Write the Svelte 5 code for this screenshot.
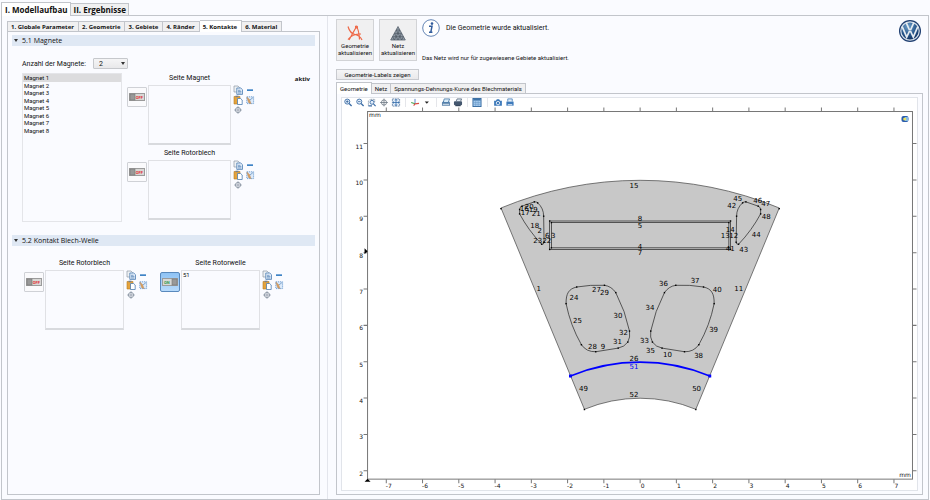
<script>
  let mainTab = "I. Modellaufbau";
  let stepTab = "5. Kontakte";
  let plotTab = "Geometrie";
  let magnetCount = "2";
  let selectedMagnet = 1;
  let states = { magnet: false, rotor: false, blech: false, welle: true };

  const mainTabs = ["I. Modellaufbau", "II. Ergebnisse"];
  const stepTabs = ["1. Globale Parameter", "2. Geometrie", "3. Gebiete", "4. Ränder", "5. Kontakte", "6. Material"];
  const plotTabs = ["Geometrie", "Netz", "Spannungs-Dehnungs-Kurve des Blechmaterials"];
  const magnets = [1, 2, 3, 4, 5, 6, 7, 8];

  // plot scale: 36.2 units per mm, origin on the symmetry axis
  const px = (mm) => 639.6 + mm * 36.2;
  const py = (mm) => 542.8 - mm * 36.3;
  const xTicks = [-7, -6, -5, -4, -3, -2, -1, 0, 1, 2, 3, 4, 5, 6, 7];
  const yTicks = [2, 3, 4, 5, 6, 7, 8, 9, 10, 11];

  // edge number, x, y
  const edges = [
    [15, 633.5, 185], [8, 639.5, 218.5], [5, 639.5, 225.5], [4, 639.5, 246], [7, 639.5, 252],
    [16, 524, 208], [17, 525, 212], [20, 529, 206], [19, 533, 209], [21, 536, 213.5], [18, 534.5, 225.5],
    [2, 539.5, 230], [6, 547, 235.5], [3, 553, 235.5], [23, 537.5, 240], [22, 546.5, 240],
    [45, 737, 198], [46, 757, 200], [47, 765, 203.5], [42, 731, 205], [48, 765.5, 216.5], [44, 755.5, 234.5],
    [43, 743, 249], [14, 729.5, 229.5], [13, 724.5, 235.5], [12, 733, 235.5], [41, 729.5, 248],
    [1, 538.5, 288], [11, 738, 288],
    [24, 573.5, 297.5], [27, 596, 289], [29, 604, 292], [25, 577, 320.5], [30, 617.5, 315.5],
    [32, 623, 332], [31, 617, 341.5], [28, 592, 346], [9, 602.5, 346],
    [36, 663, 283.5], [37, 694.5, 280.5], [40, 716.5, 289], [34, 649.5, 307], [39, 713, 329.5],
    [33, 644, 340.5], [35, 650, 350.5], [10, 667, 354.5], [38, 698, 355],
    [26, 633.5, 358], [51, 633.5, 366.5], [49, 583, 388.5], [50, 696, 388.5], [52, 633.5, 394],
  ];

  // vertices of the left half, the right half is mirrored
  const vertices = [
    [519.3, 209.3], [521.7, 206], [534, 201.7], [537.3, 202.7], [543.3, 216], [543.7, 242], [541.3, 244], [519.3, 213.7],
    [549.3, 220.8], [551, 222.4], [549.3, 249.2], [551, 247.6],
    [565.7, 303.3], [576.3, 286.7], [604, 285], [615.3, 292.3], [629, 330.7], [627.3, 341.7], [617.7, 347.7], [595.3, 351.3], [581, 344.3],
    [500.7, 208.5], [584, 409],
  ];

  const toggle = (key) => {
    states[key] = !states[key];
  };
</script>

{#snippet tabs(items, current, pick, kind)}
  <div class="tabs {kind}" role="tablist">
    {#each items as item}
      <button type="button" role="tab" aria-selected={item === current} class:active={item === current} on:click={() => pick(item)}>{item}</button>
    {/each}
  </div>
{/snippet}

{#snippet half()}
  <path d="M519.3 213.7V209.3Q519.6 206.6 521.7 206L534 201.7Q536 201.4 537.3 202.7Q543.3 208 543.3 216L543.7 242Q543.5 244.6 541.3 244Q528 230 519.3 213.7Z" />
  <path d="M565.7 303.3C565.5 293 568.5 288.5 576.3 286.7Q590 284.3 604 285Q611 286 615.3 292.3Q625 311 629 330.7Q630 337 627.3 341.7Q624 346.5 617.7 347.7L595.3 351.3Q586 351.6 581 344.3Q570 325 565.7 303.3Z" />
  {#each vertices as [x, y]}
    <rect class="vertex" x={x - 0.7} y={y - 0.7} width="1.4" height="1.4" />
  {/each}
{/snippet}

{#snippet field(key, label, content)}
  <div class="field">
    <span class="caption" id="cap-{key}">{label}</span>
    <button type="button" class="toggle" class:on={states[key]} aria-label={label} aria-pressed={states[key]} on:click={() => toggle(key)}>
      <svg viewBox="0 0 16 8" width="16" height="8">
        <rect x="0.5" y="0.5" width="15" height="7" fill="#d8d8d6" stroke="#9b9b9b" />
        {#if states[key]}
          <rect x="10" y="1" width="5" height="6" fill="#999" stroke="#777" stroke-width="0.6" />
          <text x="2" y="5.8" fill="#2f9950">ON</text>
        {:else}
          <rect x="1" y="1" width="5" height="6" fill="#999" stroke="#777" stroke-width="0.6" />
          <text x="6.8" y="5.8" fill="#e02c34">OFF</text>
        {/if}
      </svg>
    </button>
    <textarea aria-labelledby="cap-{key}" value={content}></textarea>
    <div class="tools">
      <button type="button" aria-label="Kopieren">
        <svg viewBox="0 0 10 10">
          <path d="M1 1h4l1.500 1.500V7H1z" fill="#eef1f4" stroke="#8c98a5" stroke-width="0.700" />
          <path d="M3.800 3h4l1.700 1.700V9.400H3.800z" fill="#e4eefa" stroke="#4c7db2" stroke-width="0.800" />
          <path d="M5 5.300h2.500M5 6.600h3.400M5 8h3.400" stroke="#4c7db2" stroke-width="0.700" />
        </svg>
      </button>
      <button type="button" aria-label="Entfernen">
        <svg viewBox="0 0 10 10"><rect x="2" y="4.300" width="6" height="1.700" fill="#3f84c6" /></svg>
      </button>
      <button type="button" aria-label="Einfügen">
        <svg viewBox="0 0 10 10">
          <path d="M1 1.500h6V9H1z" fill="#e5a33c" stroke="#b67c24" stroke-width="0.600" />
          <rect x="2.500" y="0.700" width="3" height="1.500" fill="#78818c" />
          <path d="M4.500 3.500h3l1.700 1.500v4.500H4.500z" fill="#fff" stroke="#4c7db2" stroke-width="0.800" />
        </svg>
      </button>
      <button type="button" aria-label="Auswahl löschen">
        <svg viewBox="0 0 10 10">
          <rect x="1.800" y="1.800" width="6.800" height="6.800" fill="#dceafa" stroke="#6a9bd0" stroke-width="0.900" stroke-dasharray="1.300 0.800" />
          <path d="M1.800 2l2.700 2.500 1.600 4.200-2.400-1z" fill="#dda05c" stroke="#a67c56" stroke-width="0.400" />
          <path d="M5 5l3-2.500" stroke="#6a93c0" stroke-width="0.800" />
        </svg>
      </button>
      <button type="button" aria-label="Zoom auf Auswahl">
        <svg viewBox="0 0 10 10">
          <circle cx="5" cy="5" r="2.600" fill="none" stroke="#8b96a3" stroke-width="0.900" />
          <path d="M5 1.200v7.600M1.200 5h7.600" stroke="#8b96a3" stroke-width="0.800" />
        </svg>
      </button>
    </div>
  </div>
{/snippet}

{#snippet lens(plus)}
  <svg viewBox="0 0 10 10">
    <circle cx="4.200" cy="4" r="2.800" fill="#e3eefb" stroke="#3c6da6" />
    <path d="M6.200 6.200L9 9" stroke="#3c6da6" stroke-width="1.500" />
    <path d={plus ? "M2.800 4h2.800M4.200 2.600v2.800" : "M2.800 4h2.800"} stroke="#28588f" stroke-width="0.800" />
  </svg>
{/snippet}

<div class="page">
  {@render tabs(mainTabs, mainTab, (t) => (mainTab = t), "main")}
  <main class="frame">
    <div class="left">
      {@render tabs(stepTabs, stepTab, (t) => (stepTab = t), "steps")}
      <div class="panel">
        <h2><span class="tri"></span>5.1 Magnete</h2>
        <div class="count">
          <label for="count">Anzahl der Magnete:</label>
          <span class="drop">
            <select id="count" bind:value={magnetCount}>
              <option>1</option>
              <option>2</option>
              <option>4</option>
            </select>
          </span>
        </div>
        <div class="magnets">
          <ul role="listbox" aria-label="Magnete">
            {#each magnets as n}
              <li role="option" aria-selected={n === selectedMagnet} class:selected={n === selectedMagnet}>
                <button type="button" on:click={() => (selectedMagnet = n)}>Magnet {n}</button>
              </li>
            {/each}
          </ul>
          <div class="fields">
            {@render field("magnet", "Seite Magnet", "")}
            {@render field("rotor", "Seite Rotorblech", "")}
          </div>
          <strong class="status">aktiv</strong>
        </div>
        <h2 class="second"><span class="tri"></span>5.2 Kontakt Blech-Welle</h2>
        <div class="shaft">
          {@render field("blech", "Seite Rotorblech", "")}
          {@render field("welle", "Seite Rotorwelle", "51")}
        </div>
      </div>
    </div>

    <div class="right">
      <header>
        <button type="button" class="big">
          <svg viewBox="0 0 16 16" width="16" height="16" fill="none" stroke="#ee6847" stroke-width="1.200">
            <path d="M1 1.500Q3 8.500 8 9.500T15 15M9.500 1.500L2 15M9.500 1.500Q12 5 12.500 14.500M1 14.500Q5 9 14 9" />
            <circle cx="9.500" cy="2" r="1" />
          </svg>
          <span>Geometrie<br />aktualisieren</span>
        </button>
        <button type="button" class="big">
          <svg viewBox="0 0 16 16" width="16" height="16">
            <path d="M8 1.500L15.300 15H0.700z" fill="#8e98a4" stroke="#59636e" stroke-width="0.800" />
            <path d="M6.300 5h3.400M4.500 8.400h7M2.600 11.700h10.800M6.300 5l5.400 10M4.500 8.400L8 15M2.600 11.700L4.300 15M9.700 5L4.300 15M11.500 8.400L8 15M13.400 11.700L11.700 15" stroke="#46505b" stroke-width="0.600" fill="none" />
          </svg>
          <span>Netz<br />aktualisieren</span>
        </button>
        <div class="messages">
          <p class="info">
            <svg viewBox="0 0 18 18" width="18" height="18">
              <circle cx="9" cy="9" r="8.300" fill="#fff" stroke="#6485b5" stroke-width="1" />
              <circle cx="10" cy="4.600" r="1.300" fill="#305b9c" />
              <path d="M7 7.300h3L8.800 13.200h1.600M7 13.200h1.800" fill="none" stroke="#305b9c" stroke-width="1.500" />
            </svg>
            Die Geometrie wurde aktualisiert.
          </p>
          <p class="note">Das Netz wird nur für zugewiesene Gebiete aktualisiert.</p>
        </div>
        <svg class="logo" viewBox="0 0 22 22" width="22" height="22">
          <defs>
            <radialGradient id="blue" cx="0.4" cy="0.25" r="0.8">
              <stop offset="0" stop-color="#6d9fca" />
              <stop offset="0.6" stop-color="#245287" />
              <stop offset="1" stop-color="#102b58" />
            </radialGradient>
          </defs>
          <circle cx="11" cy="11" r="11" fill="#1d3d70" />
          <circle cx="11" cy="11" r="9.200" fill="url(#blue)" stroke="#d5dfe9" stroke-width="1.200" />
          <path d="M7.200 2.700L10.200 9.500H11.800L14.800 2.700M3.200 6.600L7.700 17.200L10.300 11.500H11.700L14.300 17.200L18.800 6.600" fill="none" stroke="#e5ebf1" stroke-width="1.700" />
        </svg>
      </header>
      <button type="button" class="labels">Geometrie-Labels zeigen</button>

      {@render tabs(plotTabs, plotTab, (t) => (plotTab = t), "plots")}
      <div class="panel">
        <div class="graphics">
          <div class="toolbar">
            <button type="button" aria-label="Vergrößern">{@render lens(true)}</button>
            <button type="button" aria-label="Verkleinern">{@render lens(false)}</button>
            <button type="button" aria-label="Zoom-Rahmen">
              <svg viewBox="0 0 10 10">
                <path d="M1 8.500V3.500L3 1.500h5v3" fill="none" stroke="#75899e" stroke-width="0.900" stroke-dasharray="1.500 0.600" />
                <circle cx="5" cy="4.800" r="2.200" fill="#e3eefb" stroke="#3c6da6" />
                <path d="M6.600 6.500L9 9M1 8.700h4" stroke="#3c6da6" stroke-width="1.300" />
              </svg>
            </button>
            <button type="button" aria-label="Zoom auf Auswahl">
              <svg viewBox="0 0 10 10" fill="none" stroke="#6d7883" stroke-width="0.900">
                <circle cx="5" cy="5" r="2.900" />
                <path d="M5 0.700v8.600M0.700 5h8.600" />
              </svg>
            </button>
            <button type="button" aria-label="Alles anzeigen">
              <svg viewBox="0 0 10 10">
                <rect x="1" y="1" width="8" height="8" fill="#e8f1fb" stroke="#5c7ca1" stroke-width="0.900" stroke-dasharray="2 0.700" />
                <path d="M5 1.500v7M1.500 5h7M4 2.800l1-1.300 1 1.300M4 7.200l1 1.300 1-1.300M2.800 4L1.500 5l1.300 1M7.200 4l1.300 1-1.300 1" fill="none" stroke="#326aa9" stroke-width="0.900" />
              </svg>
            </button>
            <span class="sep"></span>
            <button type="button" aria-label="Ansicht">
              <svg viewBox="0 0 10 10" fill="none">
                <path d="M5 6.500V1" stroke="#4d78c6" />
                <path d="M5 6.500L0.800 5" stroke="#44a750" stroke-width="1.200" />
                <path d="M5 6.500L9.500 6M5 6.500L3.500 8.500" stroke="#d94b45" stroke-width="1.200" />
              </svg>
            </button>
            <button type="button" aria-label="Ansicht wählen">
              <svg viewBox="0 0 10 10"><path d="M2.500 3.800h4.600L4.800 6.500z" fill="#222" /></svg>
            </button>
            <span class="sep"></span>
            <button type="button" aria-label="Bild in Bericht">
              <svg viewBox="0 0 10 10">
                <path d="M0.500 5L2.500 3h5L9.500 5V8.500H0.500z" fill="#5e86ad" />
                <path d="M3 1h6L7.500 5H2z" fill="#d9ecf8" stroke="#356a9d" stroke-width="0.800" />
                <path d="M1.500 7h7" stroke="#e4eef6" />
              </svg>
            </button>
            <button type="button" aria-label="Auswahl drucken">
              <svg viewBox="0 0 10 10">
                <path d="M3 3.500L4 1h5L8 3.500" fill="#dce6ef" stroke="#43566e" stroke-width="0.800" />
                <rect x="0.500" y="3.500" width="9" height="4.500" rx="1" fill="#43566e" />
                <path d="M2 8.500h6" stroke="#23364d" stroke-width="1.200" />
              </svg>
            </button>
            <span class="sep"></span>
            <button type="button" aria-label="Tabelle">
              <svg viewBox="0 0 10 10">
                <rect x="0.500" y="0.500" width="9" height="9" fill="#a6cbee" stroke="#2f659d" />
                <path d="M1 2h8" stroke="#2f659d" stroke-width="1.500" />
                <path d="M3.500 3v6M6.300 3v6M1 5h8M1 7h8" stroke="#6797c5" stroke-width="0.600" />
              </svg>
            </button>
            <span class="sep wide"></span>
            <button type="button" aria-label="Schnappschuss">
              <svg viewBox="0 0 10 10">
                <path d="M0.700 3h2l1-1.500h2.600l1 1.500h2v5.700H0.700z" fill="#3b78b9" />
                <circle cx="5" cy="5.700" r="1.900" fill="#3b78b9" stroke="#fff" stroke-width="0.900" />
              </svg>
            </button>
            <button type="button" aria-label="Drucken">
              <svg viewBox="0 0 10 10">
                <path d="M2.500 4V1h5v3" fill="#e4eef8" stroke="#4680ba" stroke-width="0.900" />
                <rect x="1" y="4" width="8" height="4.500" fill="#3d7abb" />
                <path d="M2.500 7.500h5" stroke="#fff" />
              </svg>
            </button>
          </div>

          <svg class="plot" viewBox="342 107 574 382">
            <rect class="axis" x="367.5" y="111.500" width="544" height="367" />
            {#each xTicks as t}
              <path class="axis" d="M{px(t)} 107.500v4M{px(t)} 478.500v4" />
              <text class="tick" x={px(t) + 2.5} y="487" text-anchor="middle">{t}</text>
            {/each}
            {#each yTicks as t}
              <path class="axis" d="M363.500 {py(t)}h4M911.500 {py(t)}h4" />
              <text class="tick" x="363" y={py(t) + 5} text-anchor="end">{t}</text>
            {/each}
            <path d="M364.500 481L367.500 478L370.500 481ZM364.500 248L367.500 251L364.500 254Z" />
            <text class="tick" x="369" y="117">mm</text>
            <text class="tick" x="910" y="476" text-anchor="end">mm</text>

            <path class="sector" d="M500.700 207.800A363 363 0 0 1 778.500 207.800L695.200 408.800A145.200 145.200 0 0 0 584 408.800Z" />
            <rect class="line" x="549.300" y="220.800" width="180.600" height="28.400" />
            <rect class="line" x="551" y="222.400" width="177.200" height="25.200" />
            <g class="line">{@render half()}</g>
            <g class="line" transform="translate(1279.2) scale(-1 1)">{@render half()}</g>
            <path class="picked" d="M570.100 375.500A181.500 181.500 0 0 1 709.100 375.500" />
            <path fill="#00f" d="M568.600 374h3v3h-3zM707.600 374h3v3h-3z" />
            {#each edges as [n, x, y]}
              <text class="edge" class:picked-label={n === 51} {x} y={y + 2.5}>{n}</text>
            {/each}

            <rect x="900.500" y="116" width="7" height="6" rx="2" fill="#295cae" />
            <path d="M904 117h3v4h-3z" fill="#83bce7" />
            <circle cx="903.700" cy="119" r="1.500" fill="#f0e45c" />
          </svg>
        </div>
      </div>
    </div>
  </main>
</div>

<style>
  :global(body) {
    margin: 0;
    background: #fafbff;
  }

  .page {
    box-sizing: border-box;
    min-height: 100vh;
    padding: 2px 1px 1px;
    display: flex;
    flex-direction: column;
    font-family: Roboto, "Noto Sans", sans-serif;
    font-size: 6px;
    line-height: 8px;
    color: #111;
  }

  button,
  select,
  textarea {
    box-sizing: border-box;
    margin: 0;
    padding: 0;
    border: 0;
    background: none;
    font: inherit;
    color: inherit;
  }

  h2,
  p,
  ul {
    margin: 0;
    padding: 0;
    font-weight: normal;
  }

  svg {
    display: block;
  }

  .tabs {
    display: flex;
    align-items: flex-end;
  }

  .tabs button {
    border: 1px solid #c2c5cb;
    border-left-width: 0;
    border-bottom: 0;
    background: #f0f0f1;
    height: 10px;
    padding: 0 3px;
    white-space: nowrap;
  }

  .tabs button:first-child {
    border-left-width: 1px;
  }

  .tabs button.active {
    position: relative;
    background: #fff;
    margin-bottom: -1px;
    height: 12px;
  }

  .main,
  .steps,
  h2,
  .status {
    font-family: "Open Sans", "Noto Sans", sans-serif;
  }

  .main button {
    font-size: 8px;
    font-weight: bold;
    height: 12px;
    padding: 0 2px 0 3px;
  }

  .main button.active {
    height: 14px;
  }

  .steps button {
    font-weight: bold;
    padding: 0 4px 0 3px;
  }

  .frame {
    flex: 1;
    display: grid;
    grid-template-columns: 326px 1fr;
    border: 1px solid #c2c5cb;
  }

  .left {
    display: flex;
    flex-direction: column;
    padding: 4px 7px 4px 5px;
    border-right: 1px solid #e3e5ec;
  }

  .right {
    display: flex;
    flex-direction: column;
    padding: 3px 5px 4px 8px;
  }

  .panel {
    flex: 1;
    padding: 3px 4px;
    border: 1px solid #c2c5cb;
  }

  h2 {
    display: flex;
    align-items: center;
    gap: 4px;
    height: 11px;
    padding-left: 2px;
    background: #dfe8f4;
    font-size: 7px;
  }

  .second {
    margin-top: 13px;
  }

  .tri {
    border: 2px solid transparent;
    border-top: 3px solid #333;
    border-bottom: 0;
  }

  .count {
    display: flex;
    align-items: center;
    gap: 7px;
    margin: 12px 0 4px 10px;
    height: 11px;
    font-size: 7px;
  }

  .drop {
    display: flex;
    position: relative;
  }

  .drop::after {
    content: "";
    position: absolute;
    right: 3px;
    top: 4px;
    border: 2px solid transparent;
    border-top: 3px solid #333;
    border-bottom: 0;
    pointer-events: none;
  }

  select {
    appearance: none;
    width: 35px;
    height: 11px;
    padding-left: 5px;
    border: 1px solid #c6c8cc;
    border-radius: 1px;
    background: linear-gradient(#f5f5f6, #e8e8ea);
  }

  .magnets {
    display: flex;
    gap: 5px;
    padding: 0 5px 0 10px;
  }

  ul {
    box-sizing: border-box;
    width: 100px;
    height: 149px;
    padding-bottom: 87px;
    border: 1px solid #e4e5e9;
    display: grid;
    grid-auto-rows: 1fr;
    list-style: none;
  }

  li {
    display: flex;
    min-height: 0;
  }

  li button {
    flex: 1;
    padding-left: 1px;
    text-align: left;
    line-height: 7px;
  }

  .selected {
    background: #dcdcde;
  }

  .fields {
    display: grid;
    gap: 3px;
    align-content: start;
  }

  .status {
    margin-left: auto;
    padding-top: 2px;
  }

  .field {
    display: grid;
    grid-template-columns: 20px 83px auto;
    grid-template-rows: 12px 60px;
    column-gap: 1px;
  }

  .shaft {
    display: flex;
    gap: 12px;
    padding: 12px 0 0 12px;
  }

  .shaft .field {
    grid-template-columns: 20px 79px auto;
  }

  .caption {
    grid-column: 2;
    font-size: 7px;
    line-height: 10px;
    text-align: center;
  }

  .toggle {
    grid-column: 1;
    width: 20px;
    height: 20px;
    margin-top: 2px;
    border: 1px solid #cfd1d6;
    border-radius: 1px;
    display: grid;
    place-items: center;
    background: #fafafc;
  }

  .toggle.on {
    border-color: #5989bd;
    border-radius: 2px;
    background: linear-gradient(#8fc3f5, #b7dafb);
  }

  .toggle text {
    font-size: 4px;
    font-weight: bold;
  }

  textarea {
    resize: none;
    overflow: hidden;
    padding: 0 1px;
    border: 1px solid #e0e1e5;
    border-bottom: 2px solid #d8dade;
  }

  .tools {
    display: grid;
    grid-template-columns: 10px 10px;
    grid-auto-rows: 10px;
    column-gap: 2px;
    margin-left: 1px;
  }

  header {
    display: flex;
    gap: 5px;
    height: 42px;
  }

  .big {
    width: 38px;
    border: 1px solid #d2d3d6;
    background: #f0f0f1;
    display: flex;
    flex-direction: column;
    align-items: center;
    gap: 1px;
    padding-top: 5px;
    line-height: 7px;
  }

  .messages {
    display: grid;
    align-content: start;
    gap: 17px;
  }

  .info {
    display: flex;
    align-items: center;
    gap: 6px;
    font-size: 7px;
  }

  .note {
    line-height: 8px;
  }

  .logo {
    margin: 1px 2px 0 auto;
  }

  .labels {
    align-self: flex-start;
    width: 83px;
    height: 11px;
    margin: 8px 0 2px;
    border: 1px solid #c8cacf;
    background: linear-gradient(#f5f5f6, #e9e9eb);
  }

  .graphics {
    border: 1px solid #e1e4ea;
    background: #fff;
  }

  .toolbar {
    display: flex;
    gap: 2px;
    height: 9px;
    padding-left: 1px;
  }

  .toolbar button {
    width: 10px;
    height: 9px;
  }

  .toolbar svg {
    width: 10px;
    height: 9px;
  }

  .sep {
    width: 1px;
    margin: 0 2px;
    background: #e5e6ea;
  }

  .sep.wide {
    margin: 0 3px;
  }

  .plot {
    width: 100%;
    font-family: "DejaVu Sans", sans-serif;
  }

  .axis {
    fill: none;
    stroke: #777;
  }

  .tick {
    font-size: 6px;
    fill: #111;
  }

  .sector {
    fill: #c8c8c8;
    stroke: #444;
    stroke-width: 0.7;
  }

  .line {
    fill: none;
    stroke: #222;
    stroke-width: 0.7;
  }

  .vertex {
    fill: #000;
    stroke: none;
  }

  .picked {
    fill: none;
    stroke: #0000ff;
    stroke-width: 1.6;
  }

  .edge {
    font-size: 7px;
    text-anchor: middle;
  }

  .picked-label {
    fill: #0000ff;
  }
</style>
